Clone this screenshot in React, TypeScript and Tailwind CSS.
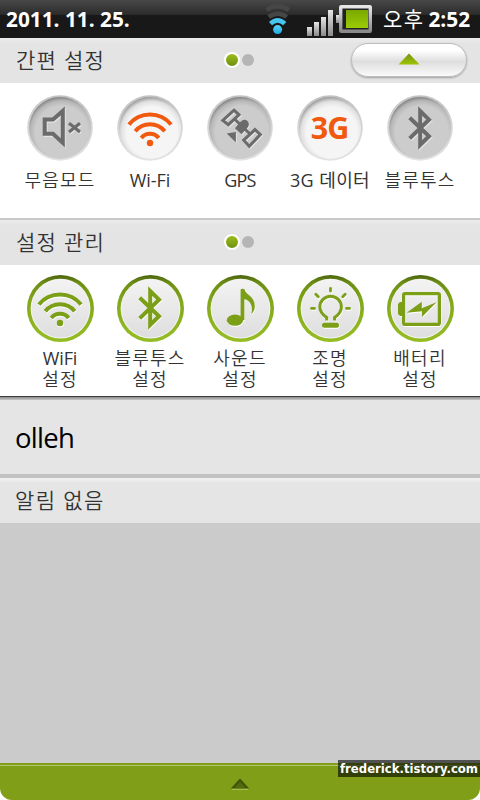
import type { ReactNode } from "react";

const WifiShape = () => (
  <g fill="none" stroke="currentColor" strokeWidth="4">
    <path d="M11.9 29.5A27.4 27.4 0 0 1 54.1 29.5" />
    <path d="M18.3 36.2A19 19 0 0 1 47.7 36.2" />
    <path d="M24.3 43A11 11 0 0 1 41.7 43" />
    <circle cx="33" cy="48" r="3.2" fill="currentColor" stroke="none" />
  </g>
);

const BluetoothShape = () => (
  <path
    d="M22.7 22.8L42 41.2L33.2 50V16L42 24.7L22.7 43.4"
    fill="none"
    stroke="currentColor"
    strokeWidth="4"
  />
);

const MuteShape = () => (
  <g fill="none" stroke="currentColor">
    <path d="M17.7 24.6H26L35.8 16V48L26 38.8H17.7Z" strokeWidth="4" />
    <path d="M42 28.3L53 37M53 28.3L42 37" strokeWidth="3.2" />
  </g>
);

const GpsShape = () => (
  <g fill="none" stroke="currentColor" strokeWidth="3">
    <path d="M27 15.2L32 19.8L21.3 29.7L15.8 25.4Z" />
    <path d="M48 34.6L53.3 39.5L42.2 51.3L36.7 45.2Z" />
    <path d="M27 23.5L43 39" />
    <path d="M37.5 29.2L34.5 32.5" strokeWidth="8.8" strokeLinecap="round" />
    <path d="M37 29.8L31.2 36.2" strokeWidth="8.8" />
    <path d="M19.7 38.5L28.9 37V47.5Z" fill="currentColor" stroke="none" />
  </g>
);

const NoteShape = () => (
  <g fill="currentColor">
    <ellipse cx="29" cy="46.2" rx="8.2" ry="5.6" />
    <path d="M34.6 46V15.5Q36.7 14 38.6 15.5C39.5 21 48.8 22 48.8 32C48.8 35.5 47.6 38 45.5 40C47.5 31 43.5 26.5 38.4 25V46Z" />
  </g>
);

const BulbShape = () => (
  <g fill="none" stroke="currentColor" strokeWidth="3" strokeLinecap="round">
    <path
      d="M30.7 46.6V43.6C27 41 23.8 37.5 23.8 33A10.8 10.8 0 0 1 45.4 33C45.4 37.5 42.3 41 38.6 43.6V46.6"
      strokeLinecap="butt"
    />
    <path d="M34.5 14.5V17M15.5 34.4H18.5M50.5 34.4H53.5M19.8 20.3L22.3 22.8M49.2 20.3L46.7 22.8" strokeWidth="2.8" />
    <path d="M28.5 51.3H40.5" strokeWidth="5" />
  </g>
);

const BatteryShape = () => (
  <g fill="currentColor">
    <rect x="17.6" y="19.6" width="35.8" height="30.8" rx="1.5" fill="none" stroke="currentColor" strokeWidth="3.2" />
    <path d="M17 28H14L12 30V40L14 42H17Z" />
    <path d="M50.5 28.3L36 43V37.3L20.7 38.7L35.8 27.8V34.2Z" />
  </g>
);

const ThreeGShape = () => (
  <text
    x="13.8"
    y="44.2"
    textLength="38.6"
    lengthAdjust="spacing"
    fill="currentColor"
    fontSize="30.5"
    fontWeight="700"
    fontFamily="'Open Sans', 'Noto Sans', sans-serif"
  >
    3G
  </text>
);

const Gradients = () => (
  <svg className="absolute h-0 w-0" aria-hidden="true">
    <defs>
      <linearGradient id="rim" x1="0" y1="0" x2="0" y2="1">
        <stop offset="0" stopColor="#b2b2b2" />
        <stop offset="0.5" stopColor="#cbcbcb" />
        <stop offset="1" stopColor="#dcdcdc" />
      </linearGradient>
      <radialGradient id="offFace" cx="0.53" cy="0.57" r="0.57">
        <stop offset="0.75" stopColor="#cccccc" />
        <stop offset="0.9" stopColor="#b6b6b6" />
        <stop offset="1" stopColor="#858585" />
      </radialGradient>
      <radialGradient id="onFace" cx="0.53" cy="0.57" r="0.57">
        <stop offset="0.72" stopColor="#f5f5f5" />
        <stop offset="0.88" stopColor="#e0e0e0" />
        <stop offset="1" stopColor="#9c9c9c" />
      </radialGradient>
      <linearGradient id="greenRing" x1="0" y1="0" x2="0" y2="1">
        <stop offset="0" stopColor="#4d6410" />
        <stop offset="0.12" stopColor="#6d8f14" />
        <stop offset="0.4" stopColor="#82a81b" />
        <stop offset="1" stopColor="#97bd25" />
      </linearGradient>
      <linearGradient id="greenFace" x1="0" y1="0" x2="0" y2="1">
        <stop offset="0" stopColor="#f3f3f3" />
        <stop offset="1" stopColor="#dedede" />
      </linearGradient>
      <linearGradient id="metal" x1="0" y1="0" x2="0" y2="1">
        <stop offset="0" stopColor="#e6e6e6" />
        <stop offset="1" stopColor="#8a8a8a" />
      </linearGradient>
      <linearGradient id="charge" x1="0" y1="0" x2="0" y2="1">
        <stop offset="0" stopColor="#79a800" />
        <stop offset="1" stopColor="#9ccc06" />
      </linearGradient>
      <linearGradient id="arrow" x1="0" y1="0" x2="0" y2="1">
        <stop offset="0" stopColor="#769510" />
        <stop offset="1" stopColor="#9dc404" />
      </linearGradient>
      <linearGradient id="cyan" x1="0" y1="0" x2="0" y2="1">
        <stop offset="0" stopColor="#59d3f5" />
        <stop offset="1" stopColor="#1fa9e0" />
      </linearGradient>
    </defs>
  </svg>
);

const ToggleIcon = ({ on, children }: { on?: boolean; children: ReactNode }) => (
  <svg viewBox="0 0 66 66" className={on ? "h-[66px] w-[66px] text-[#f0590e]" : "h-[66px] w-[66px] text-[#6b6b6b]"}>
    <circle cx="33" cy="33" r="32.8" fill="url(#rim)" opacity="0.8" />
    <circle cx="33.1" cy="33" r="30.9" fill={on ? "url(#onFace)" : "url(#offFace)"} />
    {!on && (
      <g transform="translate(0.9 1.1)" className="text-[#e4e4e4]">
        {children}
      </g>
    )}
    {children}
  </svg>
);

const SettingIcon = ({ children }: { children: ReactNode }) => (
  <svg viewBox="0 0 68 68" className="h-[68px] w-[68px] text-[#7c9f18]">
    <circle cx="34.5" cy="34.5" r="33.5" fill="url(#greenRing)" />
    <circle cx="34.5" cy="34.6" r="29.9" fill="#f4f4f4" />
    <circle cx="34.5" cy="34.4" r="29" fill="url(#greenFace)" />
    <g transform="translate(0.5 1)" className="text-white">
      {children}
    </g>
    {children}
  </svg>
);

const toggles = [
  { label: "무음모드", on: false, shape: <MuteShape />, text: "font-[350] tracking-[1.2px]" },
  { label: "Wi-Fi", on: true, shape: <WifiShape />, text: "tracking-[-0.1px]" },
  { label: "GPS", on: false, shape: <GpsShape />, text: "tracking-[-0.8px]" },
  { label: "3G 데이터", on: true, shape: <ThreeGShape />, text: "tracking-[0.4px]" },
  { label: "블루투스", on: false, shape: <BluetoothShape />, text: "font-[350] tracking-[1.2px]" },
];

const settings = [
  { label: "WiFi", shape: <g transform="translate(1 1)"><WifiShape /></g>, text: "tracking-[-0.1px]" },
  { label: "블루투스", shape: <g transform="translate(1 1)"><BluetoothShape /></g>, text: "font-[350] tracking-[1.2px]" },
  { label: "사운드", shape: <NoteShape />, text: "font-[350] tracking-[1.2px]" },
  { label: "조명", shape: <BulbShape />, text: "font-[350] tracking-[1.2px]" },
  { label: "배터리", shape: <BatteryShape />, text: "font-[350] tracking-[1.2px]" },
];

const PageDots = () => (
  <div className="mb-[2px] flex items-center gap-0.5">
    <span className="h-4 w-4 rounded-full border-2 border-white bg-linear-to-b from-[#9cbd18] to-[#6f9012]" />
    <span className="h-3 w-3 rounded-full bg-[#b5b5b5]" />
  </div>
);

const StatusBar = () => (
  <header className="flex h-[38px] items-center bg-linear-to-b from-[#484848] from-0% via-[#2c2c2c] via-38% to-[#181818] to-40% pl-1.5 text-[20.8px] font-bold text-white">
    <span className="w-[258px] pt-0.5 whitespace-nowrap">2011. 11. 25.</span>
    <svg viewBox="264 0 112 38" className="h-[38px] w-28">
      <g fill="none">
        <path d="M266.5 10Q277.6 2.5 289 10" stroke="#464646" strokeWidth="4.5" />
        <path d="M268.8 17Q277.6 10.5 286.7 17" stroke="#464646" strokeWidth="4.5" />
        <path d="M270.5 23.6Q277.6 17.2 284.8 23.6" stroke="#46c5ee" strokeWidth="4.6" />
      </g>
      <circle cx="277.6" cy="29.6" r="4.5" fill="url(#cyan)" />
      <g fill="url(#metal)">
        <rect x="307" y="27" width="5" height="9" />
        <rect x="314" y="22" width="5" height="14" />
        <rect x="321" y="17" width="5" height="19" />
        <rect x="328" y="10" width="5" height="26" />
        <rect x="336" y="15" width="4" height="8" />
      </g>
      <rect x="340.7" y="6.7" width="29.6" height="24.6" rx="0.5" fill="#222222" stroke="url(#metal)" strokeWidth="3.4" />
      <rect x="346" y="10" width="22" height="18" fill="url(#charge)" />
    </svg>
    <span className="ml-[7px] pt-0.5 whitespace-nowrap">
      <span className="mr-[4px] text-[21px] font-normal tracking-[1.4px]">오후</span>2:52
    </span>
  </header>
);

const SectionBar = ({ title, children }: { title: string; children?: ReactNode }) => (
  <div className="grid h-[45px] grid-cols-[224px_1fr_auto] items-center bg-linear-to-b from-[#ececec] from-0% via-[#e4e4e4] via-12% to-[#e4e4e4] pr-[13px] text-[#333333]">
    <h2 className="pl-4 text-[21px] font-[350] tracking-[1.3px]">{title}</h2>
    <PageDots />
    {children}
  </div>
);

export default function App() {
  return (
    <div className="relative flex h-[800px] w-[480px] flex-col overflow-hidden bg-[#cbcbcb] font-['Open_Sans','Noto_Sans_CJK_KR',sans-serif]">
      <Gradients />
      <StatusBar />

      <SectionBar title="간편 설정">
        <button className="mb-[2px] flex h-[34px] w-[116px] items-center justify-center rounded-full border border-[#bdbdbd] bg-linear-to-b from-white from-20% via-[#dedede] via-55% to-[#fafafa] shadow-[0_1px_2px_rgba(0,0,0,0.3)]">
          <svg viewBox="0 0 22 12" className="mb-px h-3 w-[22px]">
            <path d="M0.5 11.5L11 0.5L21.5 11.5Z" fill="url(#arrow)" />
          </svg>
        </button>
      </SectionBar>
      <div className="grid h-[135px] grid-cols-[repeat(5,90px)] justify-center bg-white pt-3">
        {toggles.map((t) => (
          <div key={t.label} className="flex flex-col items-center text-[#333333]">
            <ToggleIcon on={t.on}>{t.shape}</ToggleIcon>
            <span className={`mt-2 text-[18px] leading-[22px] whitespace-nowrap ${t.text}`}>{t.label}</span>
          </div>
        ))}
      </div>

      <div className="border-t-2 border-[#c9c9c9]">
        <SectionBar title="설정 관리" />
      </div>
      <div className="grid h-[131px] grid-cols-[repeat(5,90px)] justify-center bg-white pt-[9px]">
        {settings.map((s) => (
          <div key={s.label} className="flex flex-col items-center text-[18px] leading-[21px] whitespace-nowrap text-[#333333]">
            <SettingIcon>{s.shape}</SettingIcon>
            <span className={`mt-1.5 ${s.text}`}>{s.label}</span>
            <span className="font-[350] tracking-[1.2px]">설정</span>
          </div>
        ))}
      </div>

      <div className="h-1 border-t border-[#3c3c3c] bg-linear-to-b from-[#8a8a8a] to-[#c8c8c8]" />
      <div className="flex h-[74px] items-center bg-[#e5e5e5] pt-0.5 pl-[15px] text-[27.5px] tracking-[-0.7px] text-black">
        <span>olleh</span>
      </div>
      <div className="h-1 bg-[#c2c2c2]" />
      <div className="flex h-[45px] items-center bg-linear-to-b from-[#f2f2f2] from-0% via-[#e5e5e5] via-12% to-[#e5e5e5] pl-[15px] text-[21px] font-[350] tracking-[1.4px] text-[#333333]">
        알림 없음
      </div>

      <div className="flex-1" />
      <div className="h-[37px] bg-white">
        <div className="flex h-full justify-center rounded-b-xl bg-[#809e18] pt-0.5">
          <div className="flex flex-1 justify-center border-t border-[#b3c474] pt-[12px]">
            <svg viewBox="0 0 20 13" className="h-[13px] w-5">
              <path d="M1 12L10 2.4L19 12Z" fill="#a5be4c" />
              <path d="M0.8 10.5L10 0.5L19.2 10.5Z" fill="#3f5408" />
              <path d="M4 10.3L10 3.8L16 10.3Z" fill="#526c0d" />
            </svg>
          </div>
        </div>
      </div>
      <div className="absolute top-[760px] right-0 flex h-[17px] w-[142px] items-center justify-center bg-black/60 pt-0.5 font-['DejaVu_Sans',sans-serif] text-[11.7px] font-bold whitespace-nowrap text-white">
        frederick.tistory.com
      </div>
    </div>
  );
}
